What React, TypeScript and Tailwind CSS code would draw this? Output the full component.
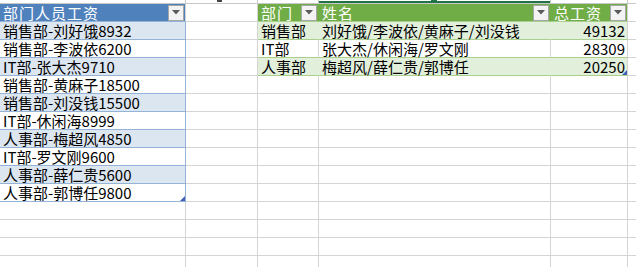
import React from "react";

const FONT = { fontFamily: '"Noto Sans CJK SC", "Liberation Sans", sans-serif' };

function Drop() {
  return (
    <div className="ml-auto mr-[1px] flex h-[16px] w-[16px] shrink-0 items-center justify-center border border-[#a6a6a6] bg-[#f3f3f3]">
      <svg width="8" height="5" viewBox="0 0 8 5">
        <path d="M0 0 H8 L4 4.5 Z" fill="#5a5a5a" />
      </svg>
    </div>
  );
}

function Handle() {
  return (
    <svg className="absolute bottom-0 right-0" width="5" height="5" viewBox="0 0 5 5">
      <path d="M5 0 V5 H0 Z" fill="#3f62b8" />
    </svg>
  );
}

const t1 = [
  "销售部-刘好饿8932",
  "销售部-李波依6200",
  "IT部-张大杰9710",
  "销售部-黄麻子18500",
  "销售部-刘没钱15500",
  "IT部-休闲海8999",
  "人事部-梅超风4850",
  "IT部-罗文刚9600",
  "人事部-薛仁贵5600",
  "人事部-郭博任9800",
];

const t2 = [
  ["销售部", "刘好饿/李波依/黄麻子/刘没钱", "49132"],
  ["IT部", "张大杰/休闲海/罗文刚", "28309"],
  ["人事部", "梅超风/薛仁贵/郭博任", "20250"],
];

export default function App() {
  const rows: React.ReactNode[] = [];

  rows.push(
    <div key="h" className="flex h-[18px]">
      <div className="flex w-[186px] items-center border-b border-r border-b-[#95b3d7] border-r-[#d4d4d4] bg-[#4f81bd] pl-[3px] text-white">
        <span className="leading-[17px] tracking-[1px]">部门人员工资</span>
        <Drop />
      </div>
      <div className="w-[72px] border-b border-r border-[#d4d4d4]" />
      <div className="flex w-[61px] items-center border-b border-r border-b-[#a9d08e] border-r-[#70ad47] bg-[#70ad47] pl-[3px] text-white">
        <span className="leading-[17px] tracking-[1px]">部门</span>
        <Drop />
      </div>
      <div className="flex w-[232px] items-center border-b border-r border-b-[#a9d08e] border-r-[#70ad47] bg-[#70ad47] pl-[3px] text-white">
        <span className="leading-[17px] tracking-[1px]">姓名</span>
        <Drop />
      </div>
      <div className="flex w-[77px] items-center border-b border-r border-b-[#a9d08e] border-r-[#d4d4d4] bg-[#70ad47] pl-[3px] text-white">
        <span className="leading-[17px] tracking-[1px]">总工资</span>
        <Drop />
      </div>
      <div className="flex-1 border-b border-[#d4d4d4]" />
    </div>
  );

  for (let i = 0; i < 14; i++) {
    const a = t1[i];
    const blue = a !== undefined && i % 2 === 0;
    const g = t2[i];
    const green = g !== undefined && i % 2 === 0;
    rows.push(
      <div key={i} className="flex h-[18px]">
        {a !== undefined ? (
          <div
            className={
              "relative flex w-[186px] items-end border-b border-r border-b-[#95b3d7] border-r-[#95b3d7] pl-[3px] " +
              (blue ? "bg-[#dce6f1]" : "bg-white")
            }
          >
            <span className="leading-[17px]">{a}</span>
            {i === 9 && <Handle />}
          </div>
        ) : (
          <div className="w-[186px] border-b border-r border-[#d4d4d4]" />
        )}
        <div className="w-[72px] border-b border-r border-[#d4d4d4]" />
        {g !== undefined ? (
          <>
            <div
              className={
                "flex w-[61px] items-end border-b border-r border-b-[#a9d08e] pl-[3px] " +
                (green ? "border-r-[#e2efda] bg-[#e2efda]" : "border-r-[#d4d4d4] bg-white")
              }
            >
              <span className="leading-[17px]">{g[0]}</span>
            </div>
            <div
              className={
                "flex w-[232px] items-end border-b border-r border-b-[#a9d08e] pl-[3px] " +
                (green ? "border-r-[#e2efda] bg-[#e2efda]" : "border-r-[#d4d4d4] bg-white")
              }
            >
              <span className="leading-[17px]">{g[1]}</span>
            </div>
            <div
              className={
                "relative flex w-[77px] items-end justify-end border-b border-r border-b-[#a9d08e] border-r-[#d4d4d4] pr-[2px] " +
                (green ? "bg-[#e2efda]" : "bg-white")
              }
            >
              <span className="leading-[17px]">{g[2]}</span>
              {i === 2 && <Handle />}
            </div>
          </>
        ) : (
          <>
            <div className="w-[61px] border-b border-r border-[#d4d4d4]" />
            <div className="w-[232px] border-b border-r border-[#d4d4d4]" />
            <div className="w-[77px] border-b border-r border-[#d4d4d4]" />
          </>
        )}
        <div className="flex-1 border-b border-[#d4d4d4]" />
      </div>
    );
  }

  return (
    <div className="h-[267px] w-[636px] overflow-hidden bg-white text-[15px] text-black" style={FONT}>
      <div className="flex h-[4px] border-b border-[#c8c8c8]">
        <div className="w-[186px] border-r border-[#c8c8c8]" />
        <div className="relative w-[72px] border-r border-[#c8c8c8]">
          <div className="absolute left-[31px] top-0 h-[2px] w-[5px] bg-[#444]" />
        </div>
        <div className="w-[61px] border-r border-[#c8c8c8]" />
        <div className="relative w-[232px] border-r border-[#c8c8c8]">
          <div className="absolute left-[112px] top-0 h-[1px] w-[6px] bg-[#217346]" />
          <div className="absolute bottom-0 left-0 right-0 h-[2px] bg-[#217346]" />
        </div>
        <div className="w-[77px] border-r border-[#c8c8c8]" />
        <div className="flex-1" />
      </div>
      {rows}
    </div>
  );
}
